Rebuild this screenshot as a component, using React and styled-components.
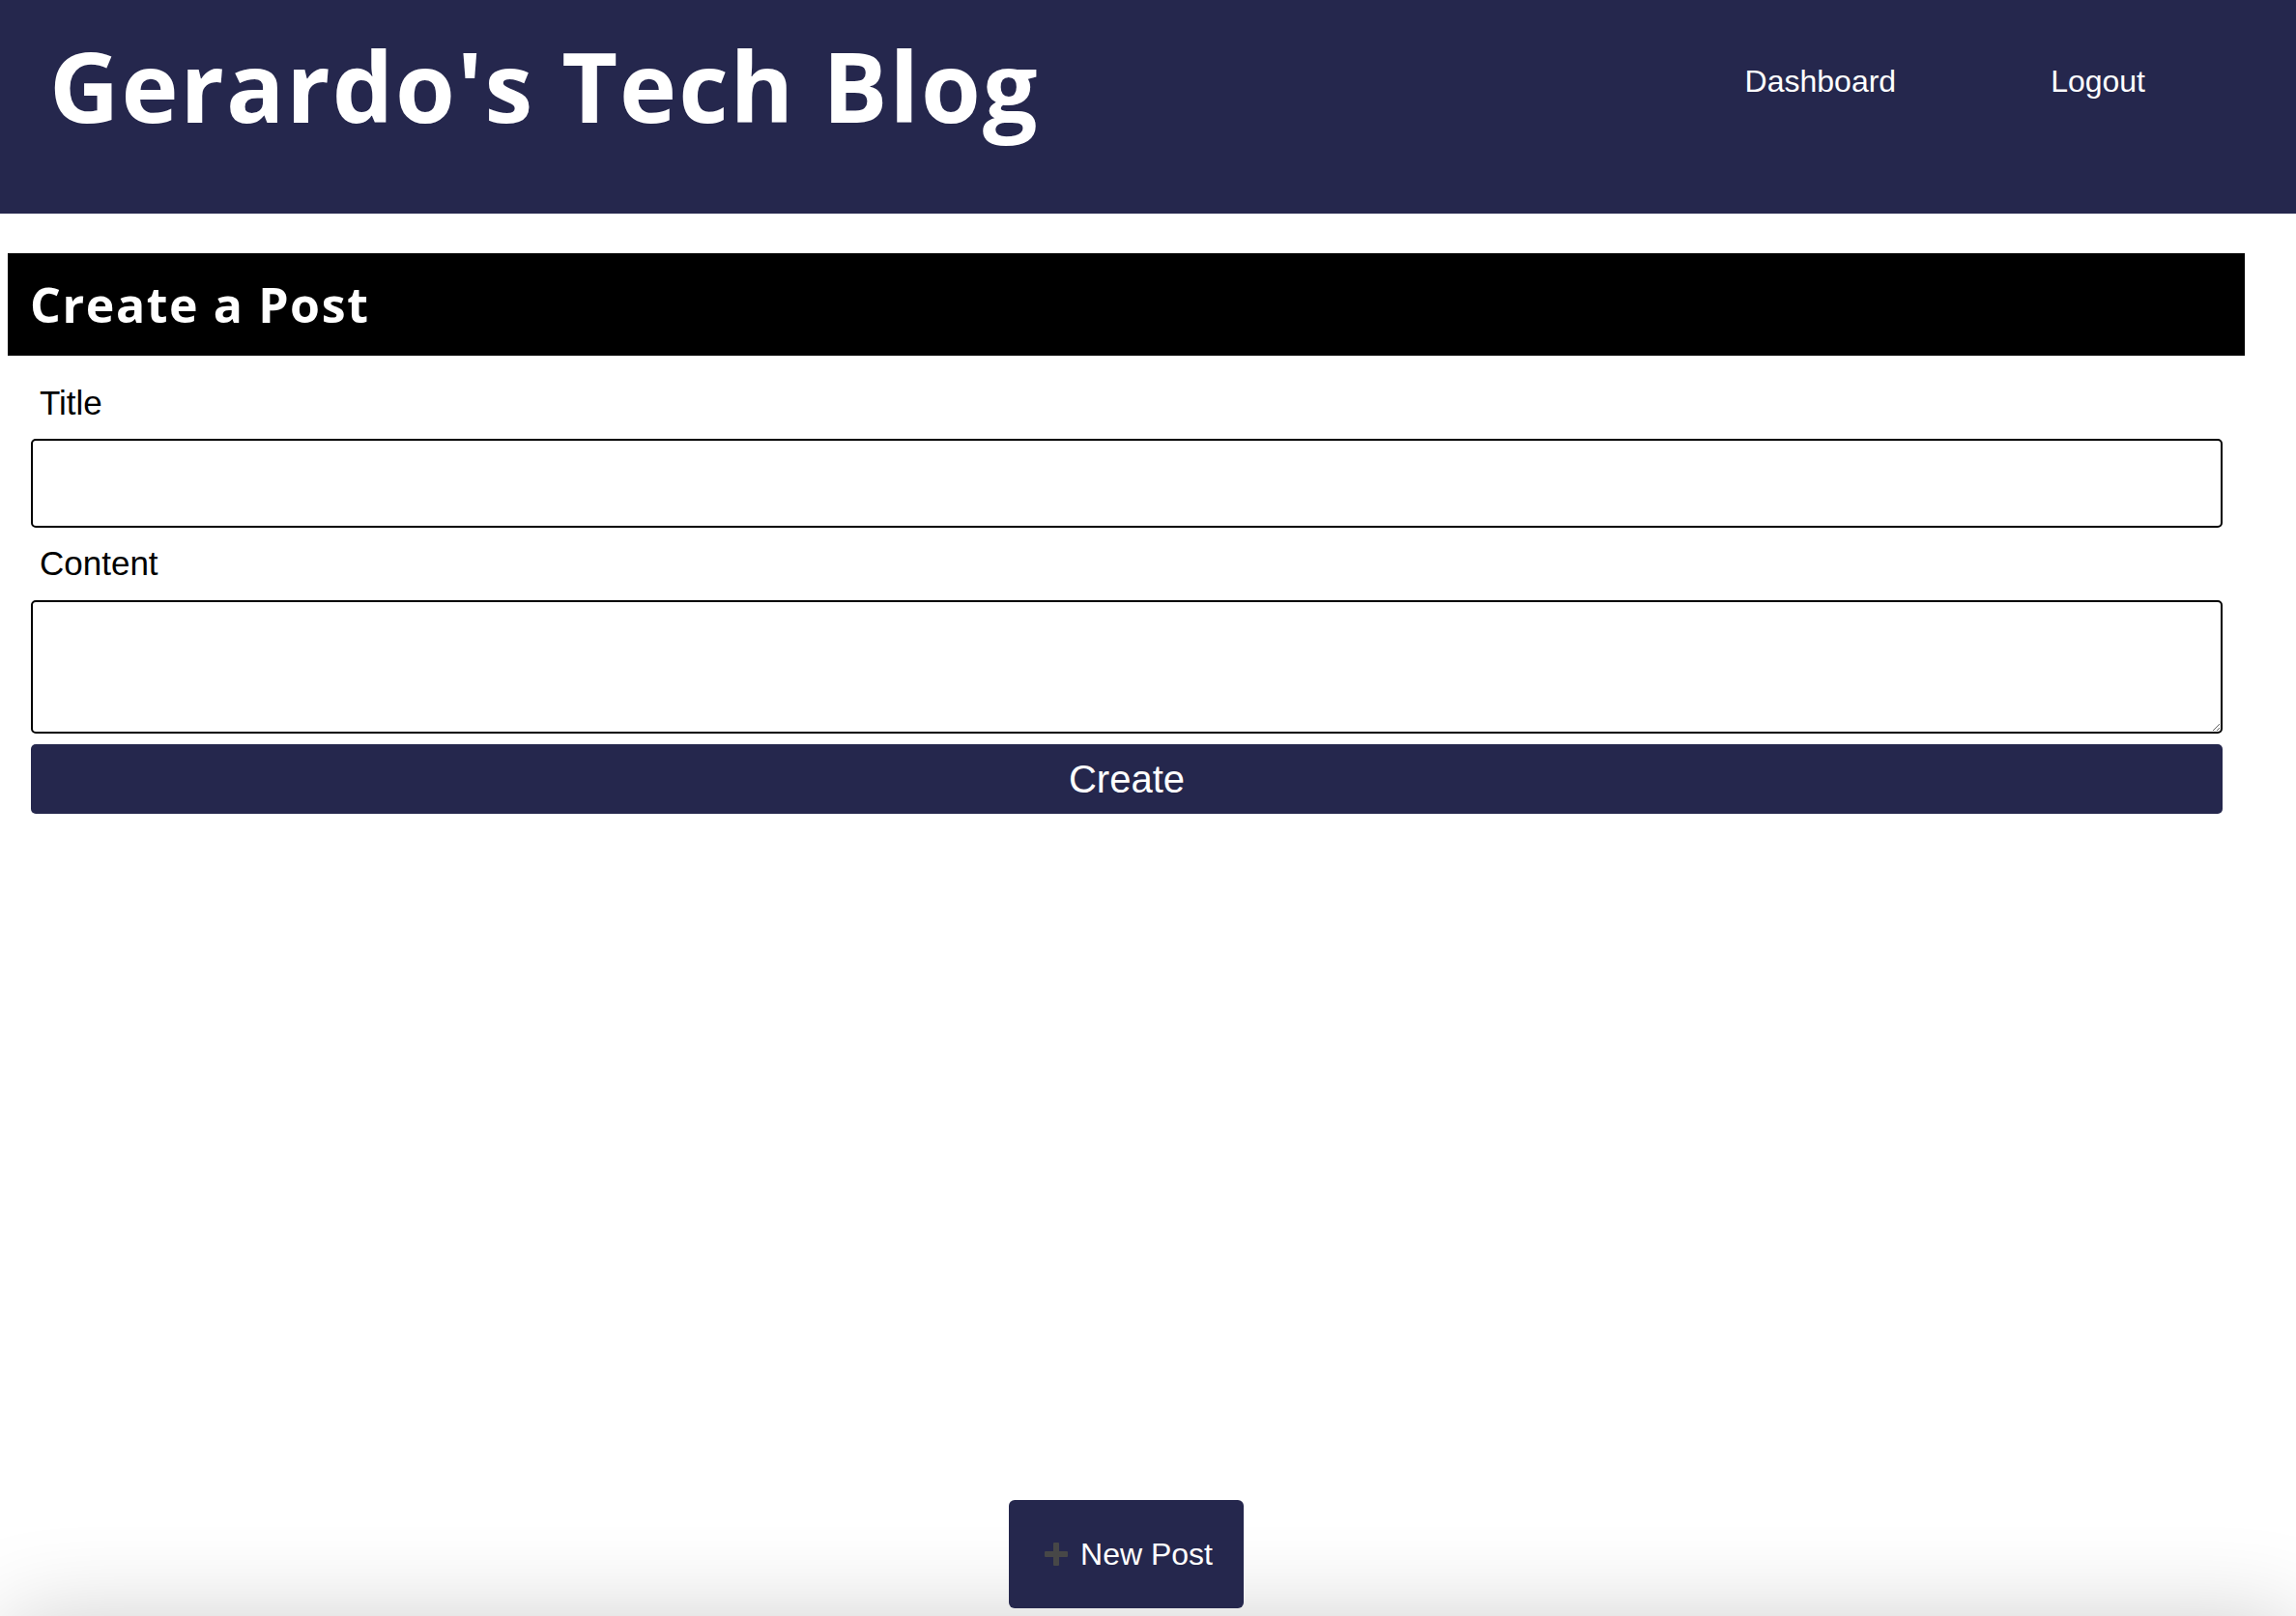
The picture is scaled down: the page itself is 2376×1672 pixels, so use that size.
import React from "react";
import styled, { createGlobalStyle } from "styled-components";

const navy = "#25274d";

const GlobalStyle = createGlobalStyle`
  html, body {
    margin: 0;
    padding: 0;
    overflow: hidden;
    background: #fff;
    font-family: "Liberation Sans", Arial, sans-serif;
  }
`;

const Header = styled.header`
  display: flex;
  justify-content: space-between;
  align-items: flex-start;
  height: 221px;
  background: ${navy};
`;

const Brand = styled.h1`
  margin: 28px 0 0 51px;
  font-family: "Open Sans", "Noto Sans", sans-serif;
  font-weight: 700;
  font-size: 100px;
  line-height: 1.2;
  letter-spacing: 2px;
  color: #fff;
`;

const Nav = styled.nav`
  display: flex;
  gap: 160px;
  margin-top: 66px;
  padding-right: 156px;
`;

const NavLink = styled.a`
  font-size: 32px;
  color: #fff;
  text-decoration: none;
  cursor: pointer;
`;

const Main = styled.main`
  width: 2315px;
  margin: 41px 0 0 8px;
`;

const TitleBar = styled.div`
  display: flex;
  align-items: center;
  height: 106px;
  padding-left: 23px;
  background: #000;
`;

const TitleText = styled.h2`
  margin: 0;
  font-family: "Open Sans", "Noto Sans", sans-serif;
  font-weight: 700;
  font-size: 50px;
  letter-spacing: 1.6px;
  color: #fff;
`;

const Form = styled.form`
  display: flex;
  flex-direction: column;
  padding: 0 23px 0 24px;
`;

const Label = styled.label`
  display: block;
  margin-top: ${(p) => p.$top}px;
  padding-left: 9px;
  font-size: 35px;
  line-height: 40px;
  color: #000;
`;

const Input = styled.input`
  box-sizing: border-box;
  width: 100%;
  height: 92px;
  margin-top: 17px;
  border: 2px solid #000;
  border-radius: 5px;
  font-size: 30px;
  padding: 0 12px;
  outline: none;
`;

const TextArea = styled.textarea`
  box-sizing: border-box;
  width: 100%;
  height: 138px;
  margin-top: 18px;
  border: 2px solid #000;
  border-radius: 5px;
  font-size: 30px;
  padding: 8px 12px;
  outline: none;
  display: block;
`;

const SubmitButton = styled.button`
  height: 72px;
  margin-top: 11px;
  border: none;
  border-radius: 5px;
  background: ${navy};
  color: #fff;
  font-family: "Liberation Sans", Arial, sans-serif;
  font-size: 40px;
  cursor: pointer;
`;

const Actions = styled.div`
  display: flex;
  justify-content: center;
  margin-top: 710px;
`;

const NewPostButton = styled.button`
  display: flex;
  align-items: center;
  gap: 13px;
  height: 112px;
  padding: 0 32px 0 37px;
  border: none;
  border-radius: 6px;
  background: ${navy};
  color: #fff;
  font-family: "Liberation Sans", Arial, sans-serif;
  font-size: 32px;
  cursor: pointer;
`;

const Footer = styled.footer`
  height: 120px;
  margin: 16px 0 0 8px;
  background: #fff;
  box-shadow: 0 0 100px rgba(0, 0, 0, 0.22);
`;

const PlusIcon = () => (
  <svg width="24" height="24" viewBox="0 0 24 24">
    <rect x="0" y="9" width="24" height="6" rx="1" fill="#474747" />
    <rect x="9" y="0" width="6" height="24" rx="1" fill="#474747" />
  </svg>
);

export default function App() {
  return (
    <>
      <GlobalStyle />
      <Header>
        <Brand>Gerardo's Tech Blog</Brand>
        <Nav>
          <NavLink>Dashboard</NavLink>
          <NavLink>Logout</NavLink>
        </Nav>
      </Header>
      <Main>
        <TitleBar>
          <TitleText>Create a Post</TitleText>
        </TitleBar>
        <Form onSubmit={(e) => e.preventDefault()}>
          <Label $top={29} htmlFor="post-title">Title</Label>
          <Input id="post-title" type="text" />
          <Label $top={17} htmlFor="post-content">Content</Label>
          <TextArea id="post-content" />
          <SubmitButton type="submit">Create</SubmitButton>
        </Form>
        <Actions>
          <NewPostButton>
            <PlusIcon />
            New Post
          </NewPostButton>
        </Actions>
      </Main>
      <Footer />
    </>
  );
}
